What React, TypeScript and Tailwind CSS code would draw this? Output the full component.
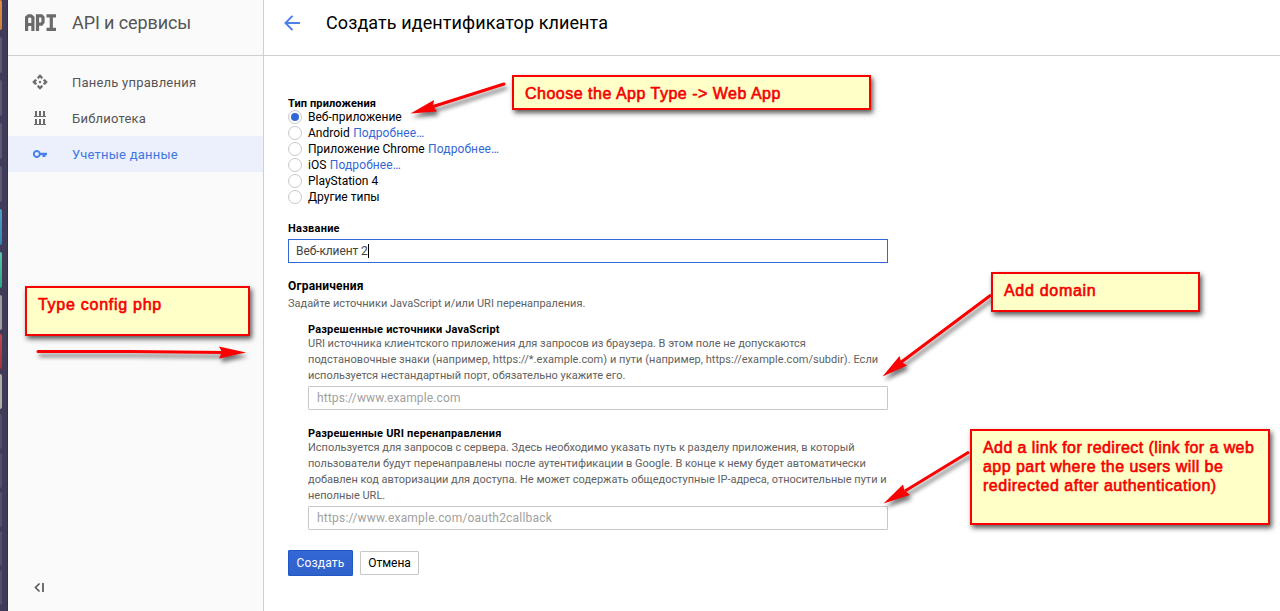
import type { ReactNode } from "react";

const launcherTiles = [
  "h-[30px] bg-gradient-to-b from-[#e08a4a] to-[#c98035]",
  "mt-[7px] h-[36px] bg-[#5d5873]",
  "mt-[7px] h-[36px] bg-[#5d5873]",
  "mt-[7px] h-[36px] bg-[#5d5873]",
  "mt-[7px] h-[36px] bg-[#5d5873]",
  "mt-[7px] h-[36px] bg-gradient-to-b from-[#4f9fc8] to-[#2f86b4]",
  "mt-[7px] h-[36px] bg-gradient-to-b from-[#5cc4ab] to-[#2aa587]",
  "mt-[7px] h-[35px] bg-[#a09c9c]",
  "mt-[4px] h-[35px] bg-gradient-to-b from-[#c04a50] to-[#a03540]",
  "mt-[5px] h-[35px] bg-[#b0aca4]",
  "mt-[5px] h-[35px] bg-[#544f6c]",
  "mt-[4px] h-[35px] bg-[#544f6c]",
  "mt-[4px] h-[35px] bg-[#544f6c]",
  "mt-[4px] h-[35px] bg-[#544f6c]",
  "mt-[4px] h-[35px] bg-[#544f6c]",
];

function DashboardIcon() {
  return (
    <svg width="16" height="16" viewBox="0 0 16 16" fill="#6b6b6b">
      <path d="M8 0.200 11 3.200 9.800 5.200 8 3.600 6.200 5.200 5 3.200Z" />
      <path d="M8 15.800 11 12.800 9.800 10.800 8 12.400 6.200 10.800 5 12.800Z" />
      <path d="M0.200 8 3.200 5 5.200 6.200 3.600 8 5.200 9.800 3.200 11Z" />
      <path d="M15.800 8 12.800 5 10.800 6.200 12.400 8 10.800 9.800 12.800 11Z" />
      <circle cx="8" cy="8" r="1.200" />
    </svg>
  );
}

function LibraryIcon() {
  return (
    <svg width="16" height="16" viewBox="0 0 16 16" fill="#6b6b6b" shapeRendering="crispEdges">
      <path d="M3 1h2v5h-2zM7 1h2v5h-2zM11 1h2v5h-2zM2 6h12v1h-12zM3 9h2v5h-2zM7 9h2v5h-2zM11 9h2v5h-2zM2 14h12v1h-12z" />
    </svg>
  );
}

function KeyIcon() {
  return (
    <svg width="16" height="16" viewBox="0 0 16 16" fill="#4a80e8">
      <path
        fillRule="evenodd"
        d="M8.600 6.700A4 4 0 1 0 8.600 9.300H10.500V11H13.500V9.300H15V6.700ZM4.800 6A2 2 0 1 1 4.800 10A2 2 0 1 1 4.800 6Z"
      />
    </svg>
  );
}

function ApiLogo() {
  return (
    <svg width="32" height="18" viewBox="0 0 32 18" fill="none" stroke="#6b6b6b" strokeWidth="3.200">
      <path d="M1.600 17V3.500L3.500 1.800H6L7.900 3.500V17M1.600 10.500H8" />
      <path d="M12.500 17V1.800H16.500L18 3.300V8.200L16.500 10.200H12.500" />
      <path d="M21.500 1.800H31M26.300 1.800V15.400M21.500 15.400H31" />
    </svg>
  );
}

function NavItem({ icon, label, active }: { icon: ReactNode; label: string; active?: boolean }) {
  return (
    <a className={`flex h-9 items-center pl-6 ${active ? "bg-[#ebf0fc] text-[#3f77e2]" : "text-[#555]"}`}>
      {icon}
      <span className="ml-6 pt-0.5 text-[13px] leading-[34px] tracking-[0.22px] whitespace-nowrap">{label}</span>
    </a>
  );
}

function Radio({ label, checked, more }: { label: string; checked?: boolean; more?: boolean }) {
  return (
    <label className="flex h-4 items-center text-[12px] leading-4 whitespace-nowrap">
      <span className="mr-1.5 flex size-3.5 items-center justify-center rounded-full border border-[#c8c8c8] bg-white">
        {checked && <span className="size-2 rounded-full bg-[#3367d6]" />}
      </span>
      {label}
      {more && <a className="ml-[3.500px] tracking-[0.11px] text-[#3367d6]">Подробнее…</a>}
    </label>
  );
}

function Lines({ lines }: { lines: string[] }) {
  return (
    <div className="relative top-px text-[11px] leading-4 whitespace-nowrap text-[#616161]">
      {lines.map((line) => (
        <p key={line} className={line.includes("*.") ? "tracking-[0.045px]" : "tracking-[-0.004px]"}>
          {line}
        </p>
      ))}
    </div>
  );
}

function Note({ className, children }: { className: string; children: ReactNode }) {
  return (
    <div
      className={`absolute border-2 border-[#f80000] bg-[#ffffc8] px-[11px] pt-[7px] font-['Liberation_Sans',sans-serif] text-[16px] leading-[19px] whitespace-nowrap text-[#f40000] shadow-[2px_3px_5px_0px_rgba(0,0,0,0.65)] [-webkit-text-stroke:0.6px_#f40000] ${className}`}
    >
      {children}
    </div>
  );
}

function Arrows() {
  return (
    <svg
      className="pointer-events-none absolute inset-0 drop-shadow-[2px_4px_2px_rgba(0,0,0,0.55)]"
      width="1280"
      height="611"
      fill="#fa0000"
      stroke="#fa0000"
    >
      <path d="M504 84 430 107.500" strokeWidth="3" strokeLinecap="round" />
      <path d="M410.500 113.500 434 100 433 106 437 111.500Z" stroke="none" />
      <path d="M38 351.500H130L225 352.500" strokeWidth="3" strokeLinecap="round" />
      <path d="M246 352.500 219 346.500 222 352 219 358.500Z" stroke="none" />
      <path d="M991 295 900 363" strokeWidth="3" />
      <path d="M882.500 376.500 899.500 356 901 361.500 907 365.500Z" stroke="none" />
      <path d="M969 452 905 491" strokeWidth="3" />
      <path d="M883.500 503.500 903 484.500 904.500 490.500 910 495Z" stroke="none" />
    </svg>
  );
}

export default function App() {
  return (
    <div className="relative flex h-[611px] w-[1280px] overflow-hidden bg-white font-[Roboto,sans-serif] text-black">
      <div className="w-2 shrink-0 border-r border-[#353049] bg-[#413b5a]">
        {launcherTiles.map((tile, i) => (
          <div key={i} className={`w-[2px] rounded-r-[2px] ${tile}`} />
        ))}
      </div>

      <aside className="flex w-64 shrink-0 flex-col border-r border-[#d0d0d0] bg-[#fafafa]">
        <div className="flex h-14 shrink-0 items-center border-b border-[#d0d0d0] pb-[9px] pl-[17px]">
          <ApiLogo />
          <span className="ml-[15px] text-[18px] leading-6 tracking-[-0.1px] whitespace-nowrap text-[#555]">
            API и сервисы
          </span>
        </div>
        <nav className="mt-2 flex flex-col">
          <NavItem icon={<DashboardIcon />} label="Панель управления" />
          <NavItem icon={<LibraryIcon />} label="Библиотека" />
          <NavItem icon={<KeyIcon />} label="Учетные данные" active />
        </nav>
        <button className="mt-auto mb-[18px] ml-[26px] w-3">
          <svg width="12" height="11" viewBox="0 0 12 11" fill="none" stroke="#555">
            <path d="M5.500 1.500 1.500 5.500 5.500 9.500" strokeWidth="1.600" />
            <path d="M9 1V10" strokeWidth="1.700" />
          </svg>
        </button>
      </aside>

      <main className="flex min-w-0 flex-1 flex-col">
        <header className="flex h-14 shrink-0 items-center border-b border-[#d0d0d0] pb-[9px] pl-5">
          <svg width="16" height="16" viewBox="0 0 16 16" fill="none" stroke="#4a80e8" strokeWidth="2">
            <path d="M8.500 0.900 1.500 8 8.500 15.100M1.500 8H16" />
          </svg>
          <h1 className="ml-[26px] text-[18px] leading-6 tracking-[0.09px] whitespace-nowrap">
            Создать идентификатор клиента
          </h1>
        </header>

        <form className="w-[624px] pt-[41px] pl-6">
          <h2 className="h-[13px] text-[11px] leading-[14px] font-bold tracking-[0.12px]">Тип приложения</h2>
          <div className="-mt-px flex flex-col">
            <Radio label="Веб-приложение" checked />
            <Radio label="Android" more />
            <Radio label="Приложение Chrome" more />
            <Radio label="iOS" more />
            <Radio label="PlayStation 4" />
            <Radio label="Другие типы" />
          </div>

          <h2 className="mt-[17px] h-[15px] text-[11px] leading-[14px] font-bold tracking-[0.25px]">Название</h2>
          <div className="mt-0.5 flex h-6 items-center border border-[#3367d6] px-[7px] text-[12px] tracking-[-0.1px] text-[#444]">
            Веб-клиент 2<span className="h-[14px] w-px bg-black" />
          </div>

          <h2 className="mt-[15px] h-4 text-[12px] leading-4 font-bold tracking-[0.2px]">Ограничения</h2>
          <div className="mt-px">
            <Lines lines={["Задайте источники JavaScript и/или URI перенапраления."]} />
          </div>

          <div className="pl-5">
            <h3 className="mt-3 h-3 text-[11px] leading-[14px] font-bold tracking-[0.18px]">
              Разрешенные источники JavaScript
            </h3>
            <Lines
              lines={[
                "URI источника клиентского приложения для запросов из браузера. В этом поле не допускаются",
                "подстановочные знаки (например, https://*.example.com) и пути (например, https://example.com/subdir). Если",
                "используется нестандартный порт, обязательно укажите его.",
              ]}
            />
            <div className="mt-[3px] flex h-6 items-center rounded-[1px] border border-[#c8c8c8] px-2 text-[12px] tracking-[0.13px] text-[#a0a0a0]">
              https://www.example.com
            </div>

            <h3 className="mt-[17px] h-3 text-[11px] leading-[14px] font-bold tracking-[0.18px]">
              Разрешенные URI перенаправления
            </h3>
            <Lines
              lines={[
                "Используется для запросов с сервера. Здесь необходимо указать путь к разделу приложения, в который",
                "пользователи будут перенаправлены после аутентификации в Google. В конце к нему будет автоматически",
                "добавлен код авторизации для доступа. Не может содержать общедоступные IP-адреса, относительные пути и",
                "неполные URL.",
              ]}
            />
            <div className="mt-[3px] flex h-6 items-center rounded-[1px] border border-[#c8c8c8] px-2 text-[12px] tracking-[0.21px] text-[#a0a0a0]">
              https://www.example.com/oauth2callback
            </div>
          </div>

          <div className="mt-5 flex items-center gap-[7px] text-[12px]">
            <button
              type="button"
              className="h-[26px] w-[65px] rounded-[1px] border border-[#1f56c8] bg-[#3367d6] bg-gradient-to-b from-[#3367d6] to-[#3062cb] tracking-[0.2px] text-white"
            >
              Создать
            </button>
            <button type="button" className="h-6 w-[59px] rounded-[1px] border border-[#c8c8c8] bg-white">
              Отмена
            </button>
          </div>
        </form>
      </main>

      <Arrows />
      <Note className="top-[75px] left-[512px] h-[35px] w-[359px] tracking-[0.5px]">
        Choose the App Type -&gt; Web App
      </Note>
      <Note className="top-[286px] left-[25px] h-[50px] w-[225px] tracking-[0.73px]">Type config php</Note>
      <Note className="top-[272px] left-[991px] h-[40px] w-[209px] tracking-[0.7px]">Add domain</Note>
      <Note className="top-[429px] left-[970px] h-[96px] w-[300px]">
        <p className="tracking-[0.41px]">Add a link for redirect (link for a web</p>
        <p className="tracking-[0.45px]">app part where the users will be</p>
        <p className="tracking-[0.52px]">redirected after authentication)</p>
      </Note>
    </div>
  );
}
